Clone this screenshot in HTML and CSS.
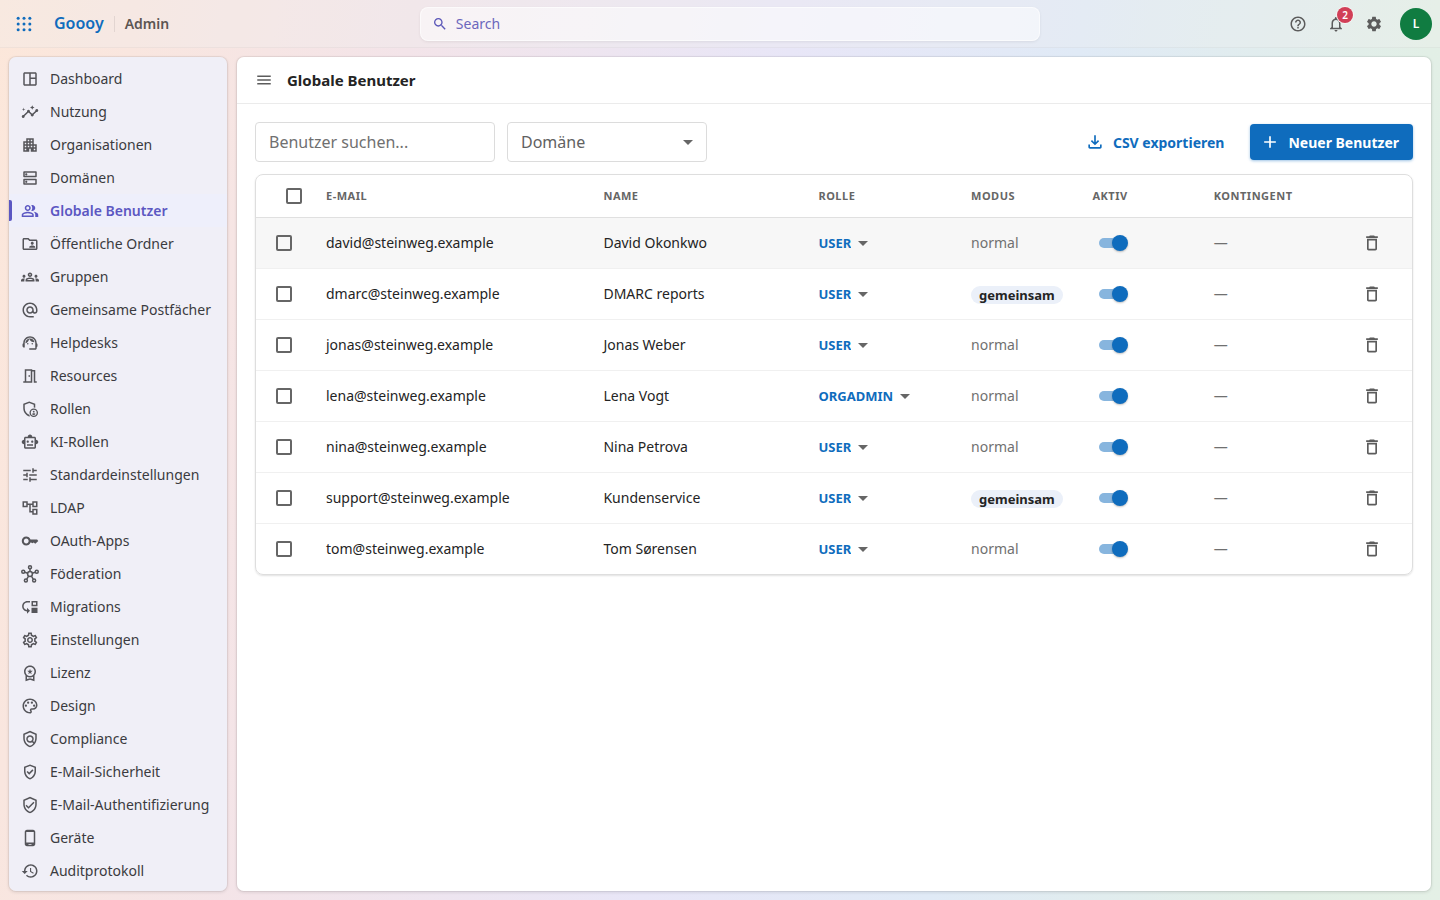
FILE: index.html
```
<!DOCTYPE html>
<html lang="de">
<head>
    <meta charset="UTF-8">
    <meta name="viewport" content="width=device-width, initial-scale=1.0">
    <title>Globale Benutzer - Goooy Admin</title>
    <link rel="stylesheet" href="styles.css">
</head>
<body>
    <header class="topbar">
        <div class="brand">
            <button class="icon-btn apps" aria-label="Apps">
                <svg viewBox="0 0 24 24"><circle cx="5" cy="5" r="1.8"/><circle cx="12" cy="5" r="1.8"/><circle cx="19" cy="5" r="1.8"/><circle cx="5" cy="12" r="1.8"/><circle cx="12" cy="12" r="1.8"/><circle cx="19" cy="12" r="1.8"/><circle cx="5" cy="19" r="1.8"/><circle cx="12" cy="19" r="1.8"/><circle cx="19" cy="19" r="1.8"/></svg>
            </button>
            <a class="logo" href="#">Goooy</a>
            <span class="section">Admin</span>
        </div>
        <label class="search">
            <svg viewBox="0 0 24 24"><path d="M15.5 14h-.79l-.28-.27C15.41 12.59 16 11.11 16 9.5 16 5.91 13.09 3 9.5 3S3 5.91 3 9.5 5.91 16 9.5 16c1.61 0 3.09-.59 4.23-1.57l.27.28v.79l5 4.99L20.49 19l-4.99-5zm-6 0C7.01 14 5 11.99 5 9.5S7.01 5 9.5 5 14 7.01 14 9.5 11.99 14 9.5 14z"/></svg>
            <input type="search" placeholder="Search" aria-label="Search">
        </label>
        <div class="actions">
            <button class="icon-btn" aria-label="Hilfe">
                <svg viewBox="0 0 24 24"><path d="M11 18h2v-2h-2v2zm1-16C6.48 2 2 6.48 2 12s4.48 10 10 10 10-4.48 10-10S17.52 2 12 2zm0 18c-4.41 0-8-3.59-8-8s3.59-8 8-8 8 3.59 8 8-3.59 8-8 8zm0-14c-2.21 0-4 1.79-4 4h2c0-1.1.9-2 2-2s2 .9 2 2c0 2-3 1.75-3 5h2c0-2.25 3-2.5 3-5 0-2.21-1.79-4-4-4z"/></svg>
            </button>
            <button class="icon-btn" aria-label="Benachrichtigungen">
                <svg viewBox="0 0 24 24"><path d="M12 22c1.1 0 2-.9 2-2h-4c0 1.1.9 2 2 2zm6-6v-5c0-3.07-1.63-5.64-4.5-6.32V4c0-.83-.67-1.5-1.5-1.5s-1.5.67-1.5 1.5v.68C7.64 5.36 6 7.92 6 11v5l-2 2v1h16v-1l-2-2zm-2 1H8v-6c0-2.48 1.51-4.5 4-4.5s4 2.02 4 4.5v6z"/></svg>
                <span class="badge">2</span>
            </button>
            <button class="icon-btn" aria-label="Einstellungen">
                <svg viewBox="0 0 24 24"><path d="M19.14 12.94c.04-.3.06-.61.06-.94 0-.32-.02-.64-.07-.94l2.03-1.58c.18-.14.23-.41.12-.61l-1.92-3.32c-.12-.22-.37-.29-.59-.22l-2.39.96c-.5-.38-1.03-.7-1.62-.94l-.36-2.54c-.04-.24-.24-.41-.48-.41h-3.84c-.24 0-.43.17-.47.41l-.36 2.54c-.59.24-1.13.57-1.62.94l-2.39-.96c-.22-.08-.47 0-.59.22L2.74 8.87c-.12.21-.08.47.12.61l2.03 1.58c-.05.3-.09.63-.09.94s.02.64.07.94l-2.03 1.58c-.18.14-.23.41-.12.61l1.92 3.32c.12.22.37.29.59.22l2.39-.96c.5.38 1.03.7 1.62.94l.36 2.54c.05.24.24.41.48.41h3.84c.24 0 .44-.17.47-.41l.36-2.54c.59-.24 1.13-.56 1.62-.94l2.39.96c.22.08.47 0 .59-.22l1.92-3.32c.12-.22.07-.47-.12-.61l-2.01-1.58zM12 15.6c-1.98 0-3.6-1.62-3.6-3.6s1.62-3.6 3.6-3.6 3.6 1.62 3.6 3.6-1.62 3.6-3.6 3.6z"/></svg>
            </button>
            <button class="avatar" aria-label="Konto">L</button>
        </div>
    </header>

    <div class="shell">
        <nav class="sidebar">
            <a href="#"><svg viewBox="0 0 24 24"><path d="M19 3H5c-1.100 0-2 .9-2 2v14c0 1.100.9 2 2 2h14c1.100 0 2-.9 2-2V5c0-1.100-.9-2-2-2zM5 19V5h6v14H5zm14 0h-6v-7h6v7zm0-9h-6V5h6v5z"/></svg>Dashboard</a>
            <a href="#"><svg viewBox="0 0 24 24"><path d="M21 8c-1.450 0-2.260 1.440-1.930 2.510l-3.550 3.560c-.3-.09-.74-.09-1.040 0l-2.550-2.550C12.270 10.450 11.460 9 10 9c-1.450 0-2.270 1.440-1.930 2.520l-4.560 4.550C2.440 15.740 1 16.550 1 18c0 1.100.9 2 2 2 1.450 0 2.260-1.440 1.930-2.510l4.550-4.560c.3.09.74.09 1.040 0l2.550 2.550C12.730 16.550 13.540 18 15 18c1.450 0 2.270-1.440 1.930-2.520l3.560-3.550c1.070.33 2.510-.48 2.510-1.930 0-1.100-.9-2-2-2z"/><path d="m15 9 .94-2.070L18 6l-2.060-.93L15 3l-.92 2.070L12 6l2.080.93zM3.500 11 4 9l2-.5L4 8l-.5-2L3 8l-2 .5L3 9z"/></svg>Nutzung</a>
            <a href="#"><svg viewBox="0 0 24 24"><path d="M17 11V3H7v4H3v14h8v-4h2v4h8V11h-4zM7 19H5v-2h2v2zm0-4H5v-2h2v2zm0-4H5V9h2v2zm4 4H9v-2h2v2zm0-4H9V9h2v2zm0-4H9V5h2v2zm4 8h-2v-2h2v2zm0-4h-2V9h2v2zm0-4h-2V5h2v2zm4 12h-2v-2h2v2zm0-4h-2v-2h2v2z"/></svg>Organisationen</a>
            <a href="#"><svg viewBox="0 0 24 24"><path d="M19 15v4H5v-4h14m1-2H4c-.55 0-1 .45-1 1v6c0 .55.45 1 1 1h16c.55 0 1-.45 1-1v-6c0-.55-.45-1-1-1zM7 18.500c-.82 0-1.500-.67-1.500-1.500s.68-1.500 1.500-1.500 1.500.67 1.500 1.500-.67 1.500-1.500 1.500zM19 5v4H5V5h14m1-2H4c-.55 0-1 .45-1 1v6c0 .55.45 1 1 1h16c.55 0 1-.45 1-1V4c0-.55-.45-1-1-1zM7 8.500c-.82 0-1.500-.67-1.500-1.500S6.180 5.500 7 5.500s1.500.68 1.500 1.500S7.830 8.500 7 8.500z"/></svg>Domänen</a>
            <a class="active" href="#" aria-current="page"><svg viewBox="0 0 24 24"><path d="M16.670 13.130C18.040 14.060 19 15.320 19 17v3h4v-3c0-2.180-3.570-3.470-6.330-3.870zM15 12c2.210 0 4-1.790 4-4s-1.790-4-4-4c-.47 0-.91.1-1.330.24C14.500 5.270 15 6.580 15 8s-.5 2.730-1.330 3.760c.42.14.86.24 1.330.24zM9 12c2.210 0 4-1.790 4-4s-1.790-4-4-4-4 1.790-4 4 1.790 4 4 4zm0-6c1.100 0 2 .9 2 2s-.9 2-2 2-2-.9-2-2 .9-2 2-2zm0 7c-2.670 0-8 1.340-8 4v3h16v-3c0-2.660-5.330-4-8-4zm6 5H3v-.99C3.200 16.290 6.300 15 9 15s5.800 1.290 6 2v1z"/></svg>Globale Benutzer</a>
            <a href="#"><svg viewBox="0 0 24 24"><path d="M20 6h-8l-2-2H4c-1.100 0-2 .9-2 2v12c0 1.100.9 2 2 2h16c1.100 0 2-.9 2-2V8c0-1.100-.9-2-2-2zm0 12H4V6h5.170l2 2H20v10zm-5-5c1.100 0 2-.9 2-2s-.9-2-2-2-2 .9-2 2 .9 2 2 2zm-4 4h8v-1c0-1.330-2.670-2-4-2s-4 .67-4 2v1z"/></svg>Öffentliche Ordner</a>
            <a href="#"><svg viewBox="0 0 24 24"><path d="M4 13c1.100 0 2-.9 2-2s-.9-2-2-2-2 .9-2 2 .9 2 2 2zm1.130 1.100C4.760 14.040 4.390 14 4 14c-.99 0-1.930.21-2.780.58C.48 14.900 0 15.620 0 16.430V18h4.500v-1.610c0-.83.23-1.610.63-2.290zM20 13c1.100 0 2-.9 2-2s-.9-2-2-2-2 .9-2 2 .9 2 2 2zm4 3.430c0-.81-.48-1.530-1.220-1.850C21.930 14.210 20.990 14 20 14c-.39 0-.76.04-1.130.1.400.68.630 1.460.630 2.290V18H24v-1.570zM16.240 13.650C15.070 13.130 13.630 12.750 12 12.750s-3.070.39-4.240.9C6.680 14.130 6 15.210 6 16.390V18h12v-1.610c0-1.180-.68-2.260-1.760-2.740zM8.070 16c.09-.23.13-.39.91-.69.970-.38 1.990-.56 3.020-.56s2.050.18 3.020.56c.77.3.81.46.91.69H8.070zM12 8c.55 0 1 .45 1 1s-.45 1-1 1-1-.45-1-1 .45-1 1-1m0-2c-1.660 0-3 1.340-3 3s1.340 3 3 3 3-1.340 3-3-1.340-3-3-3z"/></svg>Gruppen</a>
            <a href="#"><svg viewBox="0 0 24 24"><path d="M12 2C6.480 2 2 6.480 2 12s4.480 10 10 10h5v-2h-5c-4.340 0-8-3.660-8-8s3.660-8 8-8 8 3.660 8 8v1.430c0 .79-.71 1.570-1.500 1.570s-1.500-.78-1.500-1.570V12c0-2.760-2.240-5-5-5s-5 2.240-5 5 2.240 5 5 5c1.380 0 2.640-.56 3.540-1.470.65.89 1.770 1.470 2.960 1.470 1.970 0 3.500-1.600 3.500-3.570V12c0-5.520-4.480-10-10-10zm0 13c-1.660 0-3-1.340-3-3s1.340-3 3-3 3 1.340 3 3-1.340 3-3 3z"/></svg>Gemeinsame Postfächer</a>
            <a href="#"><svg viewBox="0 0 24 24"><path d="M21 12.220C21 6.730 16.740 3 12 3c-4.690 0-9 3.650-9 9.280-.6.340-1 .98-1 1.720v2c0 1.100.9 2 2 2h1v-6.100c0-3.870 3.130-7 7-7s7 3.130 7 7V19h-8v2h8c1.100 0 2-.9 2-2v-1.220c.59-.31 1-.92 1-1.640v-2.300c0-.7-.41-1.310-1-1.620z"/><circle cx="9" cy="13" r="1"/><circle cx="15" cy="13" r="1"/><path d="M18 11.030C17.520 8.180 15.040 6 12.050 6c-3.030 0-6.290 2.510-6.030 6.450 2.470-1.010 4.330-3.210 4.860-5.890 1.310 2.630 4 4.440 7.120 4.470z"/></svg>Helpdesks</a>
            <a href="#"><svg viewBox="0 0 24 24"><path d="M19 19V4h-4V3H5v16H3v2h12V6h2v15h4v-2h-2zm-6 0H7V5h6v14zm-3-8h2v2h-2z"/></svg>Resources</a>
            <a href="#"><svg viewBox="0 0 24 24"><path d="M11 2 3 5v6c0 4.900 3.300 9.500 8 11l1-.4a7 7 0 0 1-1-1.800c-3.500-1.300-6-4.900-6-8.800V6.400l6-2.300 6 2.300v3.700a7 7 0 0 1 2 .3V5z"/><path d="M17 11.300a5.700 5.700 0 1 0 0 11.400 5.700 5.700 0 0 0 0-11.400zm0 1.800a3.900 3.900 0 1 1 0 7.800 3.900 3.900 0 0 1 0-7.800z"/><circle cx="17" cy="15.600" r="1.200"/><path d="M14.600 18.700c.5-1.300 4.300-1.300 4.800 0-.6.800-1.400 1.200-2.400 1.200s-1.800-.4-2.400-1.200z"/></svg>Rollen</a>
            <a href="#"><svg viewBox="0 0 24 24"><path d="M20 9V7c0-1.100-.9-2-2-2h-3c0-1.660-1.340-3-3-3S9 3.340 9 5H6c-1.100 0-2 .9-2 2v2c-1.660 0-3 1.340-3 3s1.340 3 3 3v4c0 1.100.9 2 2 2h12c1.100 0 2-.9 2-2v-4c1.660 0 3-1.340 3-3s-1.340-3-3-3zm-2 10H6V7h12v12zM9 13c-.83 0-1.500-.67-1.500-1.500S8.170 10 9 10s1.500.67 1.500 1.500S9.830 13 9 13zm7.500-1.500c0 .83-.67 1.500-1.500 1.500s-1.500-.67-1.500-1.500.67-1.500 1.500-1.500 1.500.67 1.500 1.500zM8 15h8v2H8v-2z"/></svg>KI-Rollen</a>
            <a href="#"><svg viewBox="0 0 24 24"><path d="M3 17v2h6v-2H3zM3 5v2h10V5H3zm10 16v-2h8v-2h-8v-2h-2v6h2zM7 9v2H3v2h4v2h2V9H7zm14 4v-2H11v2h10zm-6-4h2V7h4V5h-4V3h-2v6z"/></svg>Standardeinstellungen</a>
            <a href="#"><svg viewBox="0 0 24 24"><path d="M22 11V3h-7v3H9V3H2v8h7V8h2v10h4v3h7v-8h-7v3h-2V8h2v3h7zM7 9H4V5h3v4zm10 6h3v4h-3v-4zm0-10h3v4h-3V5z"/></svg>LDAP</a>
            <a href="#"><svg viewBox="0 0 24 24"><path d="M12.650 10C11.830 7.670 9.610 6 7 6c-3.310 0-6 2.690-6 6s2.690 6 6 6c2.610 0 4.830-1.670 5.650-4h.9l1.450 1 2-1 2 1.500 3-2.500 1-1-1.500-2H12.650zM7 15.200c-1.770 0-3.200-1.430-3.200-3.200S5.230 8.800 7 8.800s3.200 1.430 3.200 3.200-1.430 3.200-3.200 3.200z"/></svg>OAuth-Apps</a>
            <a href="#"><svg viewBox="0 0 24 24" class="line"><circle cx="12" cy="12" r="3.200"/><circle cx="12" cy="3" r="2"/><circle cx="3" cy="9" r="2"/><circle cx="21" cy="9" r="2"/><circle cx="6.500" cy="20.500" r="2"/><circle cx="17.500" cy="20.500" r="2"/><path d="M12 5v4M5 9.700l4 1.300M19 9.700l-4 1.300M7.700 18.800l2.400-4.100M16.300 18.800l-2.400-4.100"/></svg>Föderation</a>
            <a href="#"><svg viewBox="0 0 24 24"><path d="M22 11V4h-8v7h8zm-6-5h4v3h-4V6zM14 13h8v7h-8z"/><path d="m8 21 4-4-4-4v3c-2.500-.3-4.500-2.400-4.500-5C3.500 8.200 5.700 6 8.500 6H12V4H8.500C4.600 4 1.500 7.100 1.500 11c0 3.700 2.800 6.700 6.500 7z"/></svg>Migrations</a>
            <a href="#"><svg viewBox="0 0 24 24"><path d="M19.430 12.980c.04-.32.07-.64.07-.98 0-.34-.03-.66-.07-.98l2.110-1.650c.19-.15.24-.42.12-.64l-2-3.460c-.09-.16-.26-.25-.44-.25-.06 0-.12.01-.17.03l-2.490 1c-.52-.4-1.080-.73-1.690-.98l-.38-2.650C14.460 2.180 14.250 2 14 2h-4c-.25 0-.46.18-.49.42l-.38 2.650c-.61.25-1.170.59-1.690.98l-2.490-1c-.06-.02-.12-.03-.18-.03-.17 0-.34.09-.43.25l-2 3.460c-.13.22-.07.49.12.64l2.110 1.650c-.04.32-.07.65-.07.98 0 .33.03.66.07.98l-2.110 1.650c-.19.15-.24.42-.12.64l2 3.460c.09.16.26.25.44.25.06 0 .12-.01.17-.03l2.490-1c.52.4 1.080.73 1.690.98l.38 2.650c.03.24.24.42.49.42h4c.25 0 .46-.18.49-.42l.38-2.650c.61-.25 1.170-.59 1.690-.98l2.490 1c.06.02.12.03.18.03.17 0 .34-.09.43-.25l2-3.460c.12-.22.07-.49-.12-.64l-2.110-1.650zm-1.980-1.710c.04.31.05.52.05.73 0 .21-.02.43-.05.73l-.14 1.130.89.7 1.080.84-.7 1.210-1.270-.51-1.040-.42-.9.68c-.43.32-.84.56-1.250.73l-1.060.43-.16 1.130-.2 1.350h-1.400l-.19-1.350-.16-1.130-1.060-.43c-.43-.18-.83-.41-1.230-.71l-.91-.7-1.060.43-1.270.51-.7-1.210 1.080-.84.89-.7-.14-1.130c-.03-.31-.05-.54-.05-.74s.02-.43.05-.73l.14-1.130-.89-.7-1.080-.84.7-1.210 1.270.51 1.040.42.9-.68c.43-.32.84-.56 1.250-.73l1.060-.43.16-1.130.2-1.350h1.390l.19 1.350.16 1.130 1.060.43c.43.18.83.41 1.230.71l.91.7 1.060-.43 1.270-.51.7 1.210-1.070.85-.89.7.14 1.130zM12 8c-2.210 0-4 1.790-4 4s1.790 4 4 4 4-1.790 4-4-1.790-4-4-4zm0 6c-1.100 0-2-.9-2-2s.9-2 2-2 2 .9 2 2-.9 2-2 2z"/></svg>Einstellungen</a>
            <a href="#"><svg viewBox="0 0 24 24"><path d="M9.680 13.690 12 11.930l2.310 1.760-.88-2.850L15.750 9h-2.840L12 6.190 11.090 9H8.250l2.310 1.840-.88 2.850zM20 10c0-4.420-3.580-8-8-8s-8 3.580-8 8c0 2.030.76 3.870 2 5.280V23l6-2 6 2v-7.720c1.240-1.410 2-3.250 2-5.280zm-8-6c3.310 0 6 2.690 6 6s-2.690 6-6 6-6-2.690-6-6 2.690-6 6-6zm0 15-4 1.020v-3.100c1.180.68 2.540 1.080 4 1.080s2.820-.4 4-1.080v3.100L12 19z"/></svg>Lizenz</a>
            <a href="#"><svg viewBox="0 0 24 24"><path d="M12 22C6.490 22 2 17.510 2 12S6.490 2 12 2s10 4.040 10 9c0 3.310-2.690 6-6 6h-1.770c-.28 0-.5.22-.5.5 0 .12.05.23.13.33.41.47.64 1.060.64 1.670 0 1.380-1.120 2.500-2.500 2.500zm0-18c-4.410 0-8 3.590-8 8s3.590 8 8 8c.28 0 .5-.22.5-.5 0-.16-.08-.28-.14-.35-.41-.46-.63-1.050-.63-1.650 0-1.380 1.120-2.500 2.500-2.500H16c2.210 0 4-1.790 4-4 0-3.860-3.590-7-8-7z"/><circle cx="6.500" cy="11.500" r="1.500"/><circle cx="9.500" cy="7.500" r="1.500"/><circle cx="14.500" cy="7.500" r="1.500"/><circle cx="17.500" cy="11.500" r="1.500"/></svg>Design</a>
            <a href="#"><svg viewBox="0 0 24 24"><path d="M12 1 3 5v6c0 5.550 3.840 10.740 9 12 5.160-1.260 9-6.450 9-12V5l-9-4zm7 10c0 1.850-.51 3.650-1.380 5.210l-1.450-1.450c1.290-1.940 1.070-4.580-.64-6.290-1.950-1.950-5.120-1.950-7.070 0-1.950 1.950-1.950 5.120 0 7.070 1.710 1.710 4.350 1.920 6.290.64l1.720 1.720c-1.190 1.420-2.730 2.510-4.470 3.040-4.020-1.250-7-5.420-7-9.940V6.300l7-3.110 7 3.110V11zm-7 4c-1.660 0-3-1.340-3-3s1.340-3 3-3 3 1.340 3 3-1.340 3-3 3z"/></svg>Compliance</a>
            <a href="#"><svg viewBox="0 0 24 24"><path d="M12 2 4 5v6.090c0 5.050 3.410 9.760 8 10.910 4.590-1.150 8-5.860 8-10.910V5l-8-3zm6 9.090c0 4-2.550 7.700-6 8.830-3.450-1.130-6-4.820-6-8.830v-4.700l6-2.250 6 2.250v4.700zm-9.180-.5L7.400 12l3.540 3.540 5.660-5.660-1.410-1.410-4.240 4.240-2.130-2.120z"/></svg>E-Mail-Sicherheit</a>
            <a href="#"><svg viewBox="0 0 24 24"><path d="M12 1 3 5v6c0 5.550 3.840 10.740 9 12 5.160-1.260 9-6.450 9-12V5l-9-4zm7 10c0 4.520-2.980 8.690-7 9.930-4.020-1.240-7-5.410-7-9.930V6.300l7-3.110 7 3.110V11zm-11.590.590L6 13l4 4 8-8-1.410-1.420L10 14.170z"/></svg>E-Mail-Authentifizierung</a>
            <a href="#"><svg viewBox="0 0 24 24"><path d="M16 1H8C6.340 1 5 2.340 5 4v16c0 1.660 1.340 3 3 3h8c1.660 0 3-1.340 3-3V4c0-1.660-1.340-3-3-3zm1 17H7V4h10v14zm-3 3h-4v-1h4v1z"/></svg>Geräte</a>
            <a href="#"><svg viewBox="0 0 24 24"><path d="M13 3c-4.970 0-9 4.030-9 9H1l3.890 3.890.07.14L9 12H6c0-3.870 3.130-7 7-7s7 3.130 7 7-3.130 7-7 7c-1.930 0-3.680-.79-4.940-2.060l-1.420 1.420C8.270 19.990 10.510 21 13 21c4.970 0 9-4.030 9-9s-4.030-9-9-9zm-1 5v5l4.280 2.540.72-1.210-3.500-2.080V8H12z"/></svg>Auditprotokoll</a>
        </nav>

        <main class="panel">
            <div class="panel-head">
                <button class="icon-btn small" aria-label="Menü">
                    <svg viewBox="0 0 24 24"><path d="M3 18h18v-2H3v2zm0-5h18v-2H3v2zm0-7v2h18V6H3z"/></svg>
                </button>
                <h1>Globale Benutzer</h1>
            </div>

            <div class="content">
                <div class="toolbar">
                    <input class="field" type="text" placeholder="Benutzer suchen..." aria-label="Benutzer suchen">
                    <div class="select-wrap">
                        <select class="field" aria-label="Domäne">
                            <option>Domäne</option>
                            <option>steinweg.example</option>
                        </select>
                    </div>
                    <button class="btn text-btn">
                        <svg viewBox="0 0 24 24"><path d="m12 16-5-5 1.400-1.450 2.600 2.600V4h2v8.150l2.600-2.600L17 11l-5 5zm-6 4c-1.100 0-2-.9-2-2v-3h2v3h12v-3h2v3c0 1.100-.9 2-2 2H6z"/></svg>
                        CSV exportieren
                    </button>
                    <button class="btn primary">
                        <svg viewBox="0 0 24 24"><path d="M19 13h-6v6h-2v-6H5v-2h6V5h2v6h6v2z"/></svg>
                        Neuer Benutzer
                    </button>
                </div>

                <div class="table-card">
                    <table>
                        <colgroup>
                            <col class="col-check">
                            <col class="col-mail">
                            <col class="col-name">
                            <col class="col-role">
                            <col class="col-mode">
                            <col class="col-active">
                            <col class="col-quota">
                            <col>
                        </colgroup>
                        <thead>
                            <tr>
                                <th><input class="check" type="checkbox" aria-label="Alle auswählen"></th>
                                <th>E-MAIL</th>
                                <th>NAME</th>
                                <th>ROLLE</th>
                                <th>MODUS</th>
                                <th>AKTIV</th>
                                <th>KONTINGENT</th>
                                <th></th>
                            </tr>
                        </thead>
                        <tbody id="users"></tbody>
                    </table>
                </div>
            </div>
        </main>
    </div>

    <script>
        const users = [
            ['david@steinweg.example', 'David Okonkwo', 'USER', 'normal'],
            ['dmarc@steinweg.example', 'DMARC reports', 'USER', 'gemeinsam'],
            ['jonas@steinweg.example', 'Jonas Weber', 'USER', 'normal'],
            ['lena@steinweg.example', 'Lena Vogt', 'ORGADMIN', 'normal'],
            ['nina@steinweg.example', 'Nina Petrova', 'USER', 'normal'],
            ['support@steinweg.example', 'Kundenservice', 'USER', 'gemeinsam'],
            ['tom@steinweg.example', 'Tom Sørensen', 'USER', 'normal']
        ];
        const roles = ['USER', 'ORGADMIN'];

        document.getElementById('users').innerHTML = users.map(([mail, name, role, mode]) => `
            <tr>
                <td><input class="check" type="checkbox" aria-label="${mail} auswählen"></td>
                <td>${mail}</td>
                <td>${name}</td>
                <td>
                    <span class="role">
                        <select aria-label="Rolle von ${name}">
                            ${roles.map(r => `<option${r === role ? ' selected' : ''}>${r}</option>`).join('')}
                        </select>
                    </span>
                </td>
                <td><span class="${mode === 'normal' ? 'muted' : 'chip'}">${mode}</span></td>
                <td><input class="switch" type="checkbox" role="switch" checked aria-label="${name} aktiv"></td>
                <td class="muted">—</td>
                <td class="row-action">
                    <button class="icon-btn small" aria-label="${name} löschen">
                        <svg viewBox="0 0 24 24"><path d="M6 19c0 1.100.9 2 2 2h8c1.100 0 2-.9 2-2V7H6v12zM8 9h8v10H8V9zm7.500-5-1-1h-5l-1 1H5v2h14V4h-3.500z"/></svg>
                    </button>
                </td>
            </tr>
        `).join('');
    </script>
</body>
</html>
```
FILE: styles.css
```
* {
    box-sizing: border-box;
}

body {
    margin: 0;
    height: 100vh;
    display: flex;
    flex-direction: column;
    font-family: 'Noto Sans', sans-serif;
    font-size: 14px;
    line-height: 21px;
    color: #242424;
    background: linear-gradient(100deg, #fce7da 0%, #f3e4e9 26%, #e8e6f7 50%, #e0eaf6 68%, #e2efe6 90%, #e4f0e6 100%);
}

button,
input,
select {
    font: inherit;
    color: inherit;
}

button {
    border: 0;
    background: none;
    padding: 0;
    cursor: pointer;
}

a {
    text-decoration: none;
    color: inherit;
}

svg {
    width: 20px;
    height: 20px;
    fill: currentColor;
    flex: none;
}

/* top bar */
.topbar {
    height: 48px;
    flex: none;
    display: grid;
    grid-template-columns: 21fr minmax(200px, 620px) 20fr;
    align-items: center;
    padding: 0 8px;
    background: rgba(240, 238, 240, 0.3);
    border-bottom: 1px solid rgba(0, 0, 0, 0.03);
}

.brand {
    display: flex;
    align-items: center;
}

.icon-btn {
    position: relative;
    display: inline-flex;
    align-items: center;
    justify-content: center;
    width: 32px;
    height: 32px;
    color: #5c5c5c;
}

.icon-btn svg {
    width: 18px;
    height: 18px;
}

.icon-btn.small {
    width: 28px;
    height: 28px;
}

.icon-btn.apps {
    color: #0f6cbd;
}

.apps svg,
.row-action svg {
    width: 20px;
    height: 20px;
}

.logo {
    margin-left: 14px;
    font-size: 16px;
    font-weight: 600;
    color: #0f6cbd;
}

.section {
    margin-left: 10px;
    padding-left: 10px;
    border-left: 1px solid rgba(0, 0, 0, 0.08);
    font-weight: 600;
    line-height: 16px;
    color: #5c5552;
}

.search {
    display: flex;
    align-items: center;
    gap: 8px;
    height: 34px;
    padding: 0 11px;
    border: 1px solid rgba(255, 255, 255, 0.6);
    border-radius: 8px;
    background: rgba(255, 255, 255, 0.5);
    box-shadow: 0 1px 3px rgba(0, 0, 0, 0.07);
    color: #5b57b8;
}

.search svg {
    width: 16px;
    height: 16px;
}

.search input {
    flex: 1;
    min-width: 0;
    padding: 0;
    border: 0;
    outline: 0;
    background: none;
}

.search input::placeholder {
    color: #6c67bd;
    opacity: 1;
}

.actions {
    display: flex;
    justify-content: flex-end;
    align-items: center;
    gap: 6px;
}

.badge {
    position: absolute;
    top: -1px;
    right: -1px;
    width: 16px;
    height: 16px;
    border-radius: 50%;
    background: #d13f57;
    color: #fff;
    font-size: 10px;
    font-weight: 600;
    line-height: 16px;
    box-shadow: 0 0 0 1px #f4f6f4;
}

.avatar {
    width: 32px;
    height: 32px;
    margin-left: 4px;
    border-radius: 50%;
    background: #107c41;
    color: #fff;
    font-size: 12px;
    font-weight: 600;
}

/* layout */
.shell {
    flex: 1;
    min-height: 0;
    display: flex;
    gap: 8px;
    padding: 8px;
}

.sidebar,
.panel {
    border: 1px solid rgba(0, 0, 0, 0.05);
    border-radius: 8px;
    background-clip: padding-box;
    box-shadow: 0 1px 3px rgba(0, 0, 0, 0.08);
    overflow: hidden;
}

.sidebar {
    width: 220px;
    flex: none;
    padding-top: 5px;
    background-color: #f0eff7;
}

.sidebar a {
    display: flex;
    align-items: center;
    gap: 11px;
    padding: 6px 12px;
    color: #3b3b40;
    white-space: nowrap;
}

.sidebar svg {
    width: 18px;
    height: 18px;
    color: #55555a;
}

.sidebar .line {
    fill: none;
    stroke: currentColor;
    stroke-width: 2;
}

.sidebar .active {
    position: relative;
    background: #eeeffb;
    color: #5b57c2;
    font-weight: 600;
}

.sidebar .active svg {
    color: inherit;
}

.sidebar .active::before {
    content: '';
    position: absolute;
    left: 0;
    top: 6px;
    bottom: 6px;
    width: 3px;
    border-radius: 0 2px 2px 0;
    background: #5b57c2;
}

.panel {
    flex: 1;
    min-width: 0;
    background-color: #fff;
}

.panel-head {
    display: flex;
    align-items: center;
    gap: 9px;
    height: 47px;
    padding: 0 13px;
    border-bottom: 1px solid #ebebeb;
}

.panel-head h1 {
    margin: 0;
    font-size: 15px;
    font-weight: 700;
}

.content {
    padding: 18px;
}

/* filters and buttons */
.toolbar {
    display: flex;
    align-items: center;
    gap: 12px;
    margin-bottom: 12px;
}

.field {
    width: 240px;
    height: 40px;
    padding: 0 13px;
    border: 1px solid #dcdcdc;
    border-radius: 4px;
    background: #fff;
    font-size: 16px;
    color: #616161;
}

.field::placeholder {
    color: #707070;
    opacity: 1;
}

.select-wrap {
    position: relative;
    margin-right: auto;
}

.select-wrap .field {
    width: 200px;
    appearance: none;
}

.select-wrap::after,
.role::after {
    content: '';
    border: 5px solid transparent;
    border-top-color: #666;
    border-bottom: 0;
    pointer-events: none;
}

.select-wrap::after {
    position: absolute;
    right: 14px;
    top: 18px;
}

.btn {
    display: inline-flex;
    align-items: center;
    gap: 8px;
    height: 36px;
    padding: 0 14px 0 10px;
    border-radius: 4px;
    font-weight: 700;
    white-space: nowrap;
}

.text-btn {
    color: #0f6cbd;
}

.primary {
    background: #0f6cbd;
    color: #fff;
    box-shadow: 0 1px 3px rgba(15, 108, 189, 0.4);
}

/* users table */
.table-card {
    border: 1px solid #dedede;
    border-radius: 8px;
    box-shadow: 0 1px 2px rgba(0, 0, 0, 0.12);
    overflow: hidden;
}

table {
    width: 100%;
    table-layout: fixed;
    border-collapse: collapse;
}

.col-check { width: 54px; }
.col-mail { width: 24%; }
.col-name { width: 18.6%; }
.col-role { width: 13.2%; }
.col-mode,
.col-active { width: 10.5%; }
.col-quota { width: 12%; }

th,
td {
    padding: 0 16px;
    text-align: left;
    white-space: nowrap;
}

th {
    height: 42px;
    border-bottom: 1px solid #e0e0e0;
    font-size: 11px;
    font-weight: 700;
    letter-spacing: 0.5px;
    color: #666;
}

td {
    height: 51px;
    border-bottom: 1px solid #f0f0f0;
}

th:first-child {
    padding: 0 0 0 30px;
}

td:first-child {
    padding: 0 0 0 20px;
}

tbody tr:first-child {
    background: #f7f7f7;
}

tbody tr:last-child td {
    border-bottom: 0;
}

.check {
    appearance: none;
    display: block;
    width: 16px;
    height: 16px;
    margin: 0;
    border: 2px solid #666;
    border-radius: 2px;
}

.role {
    display: inline-flex;
    align-items: center;
    gap: 7px;
}

.role select {
    appearance: none;
    field-sizing: content;
    padding: 0;
    border: 0;
    background: none;
    font-size: 13px;
    font-weight: 700;
    color: #0f6cbd;
}

.muted {
    color: #707070;
}

.chip {
    display: inline-block;
    padding: 0 8px;
    border-radius: 9px;
    background: #ebf0f9;
    font-size: 13px;
    font-weight: 700;
    line-height: 18px;
    vertical-align: middle;
}

.switch {
    appearance: none;
    display: grid;
    align-items: center;
    width: 29px;
    height: 16px;
    margin: 0 0 0 7px;
}

.switch::before,
.switch::after {
    content: '';
    grid-area: 1 / 1;
}

.switch::before {
    width: 26px;
    height: 10px;
    border-radius: 5px;
    background: #87b5de;
}

.switch::after {
    justify-self: end;
    width: 16px;
    height: 16px;
    border-radius: 50%;
    background: #0f6cbd;
    box-shadow: 0 1px 2px rgba(0, 0, 0, 0.25);
}

.row-action {
    padding-right: 26px;
    text-align: right;
}

.row-action .icon-btn {
    vertical-align: middle;
}
```
